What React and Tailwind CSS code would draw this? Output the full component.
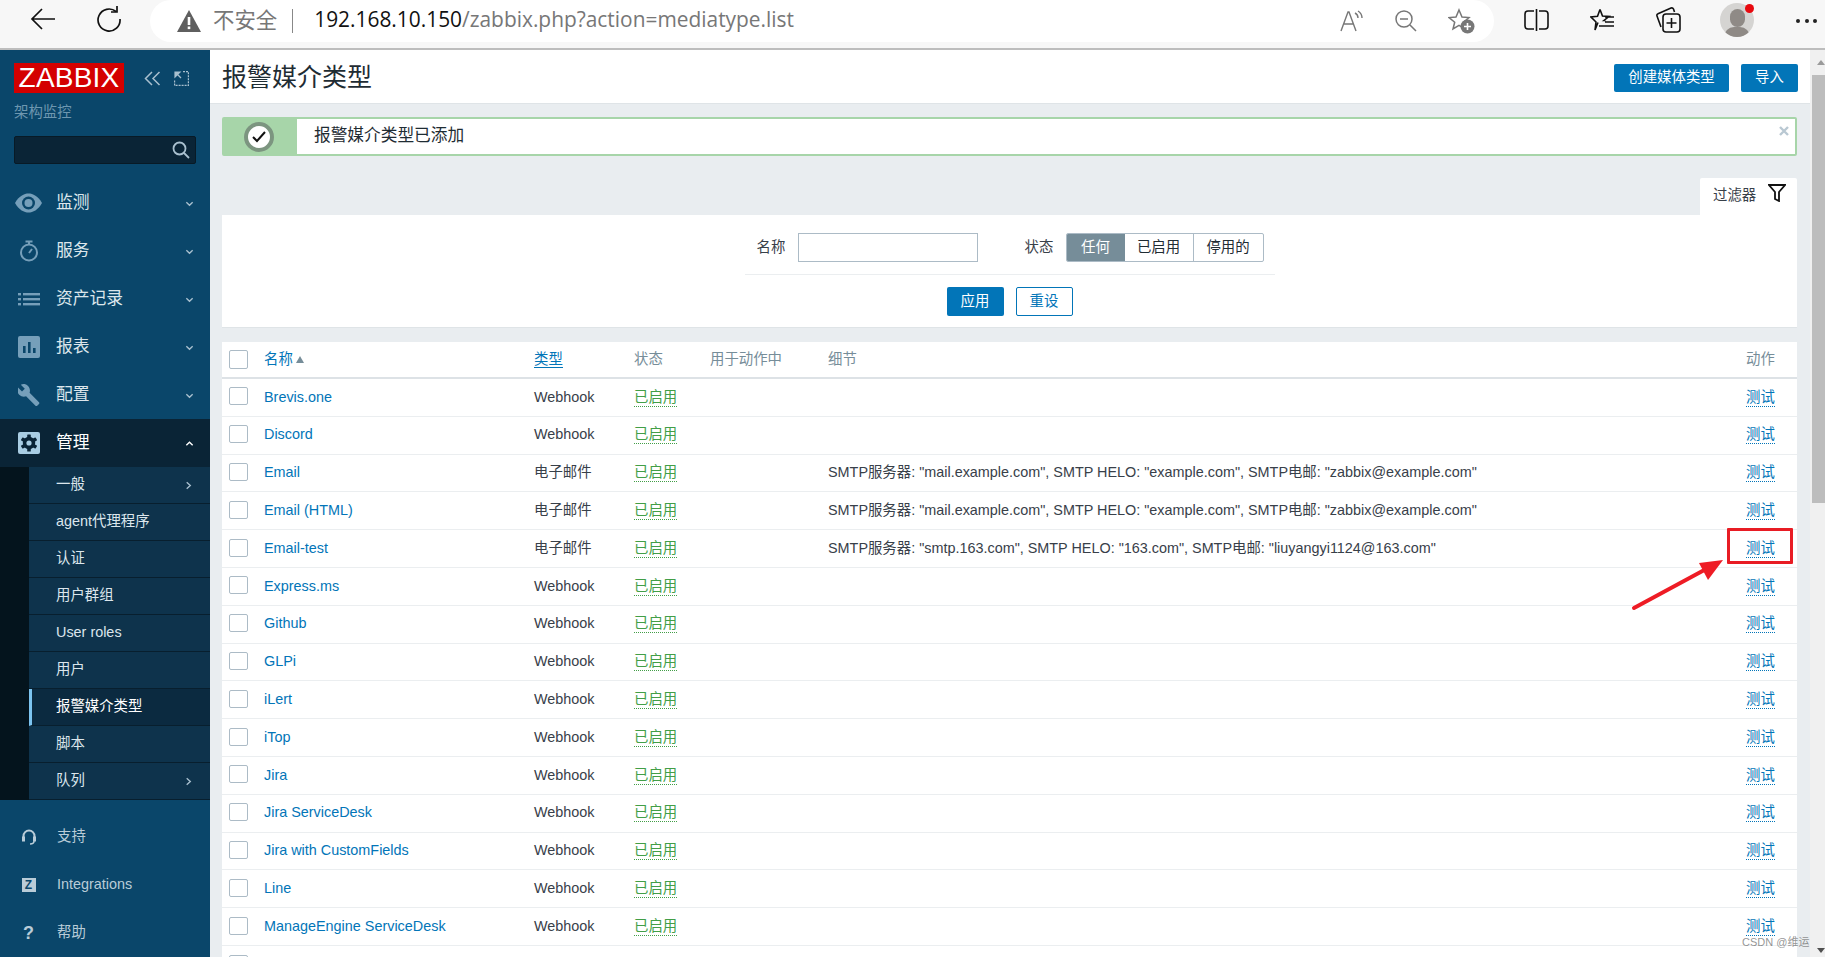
import React from "react";

const rows = [
  ["Brevis.one", "Webhook", ""],
  ["Discord", "Webhook", ""],
  ["Email", "电子邮件", 'SMTP服务器: "mail.example.com", SMTP HELO: "example.com", SMTP电邮: "zabbix@example.com"'],
  ["Email (HTML)", "电子邮件", 'SMTP服务器: "mail.example.com", SMTP HELO: "example.com", SMTP电邮: "zabbix@example.com"'],
  ["Email-test", "电子邮件", 'SMTP服务器: "smtp.163.com", SMTP HELO: "163.com", SMTP电邮: "liuyangyi1124@163.com"'],
  ["Express.ms", "Webhook", ""],
  ["Github", "Webhook", ""],
  ["GLPi", "Webhook", ""],
  ["iLert", "Webhook", ""],
  ["iTop", "Webhook", ""],
  ["Jira", "Webhook", ""],
  ["Jira ServiceDesk", "Webhook", ""],
  ["Jira with CustomFields", "Webhook", ""],
  ["Line", "Webhook", ""],
  ["ManageEngine ServiceDesk", "Webhook", ""],
];

const Chevron = ({ up, right, light }) => (
  <svg width="9" height="9" viewBox="0 0 10 10" fill="none" stroke={light ? "#ffffff" : "#a9c0cf"} strokeWidth="1.5" className="shrink-0">
    {up ? <path d="M1.5 7 5 3.5 8.5 7" /> : right ? <path d="M3 1.5 7 5 3 8.5" /> : <path d="M1.5 3.5 5 7 8.5 3.5" />}
  </svg>
);

const NavIcon = ({ kind }) => {
  const c = "#769fba";
  if (kind === "eye")
    return (
      <svg width="27" height="20" viewBox="0 0 27 20">
        <path d="M0 10C4 3 9 0.5 13.5 0.5S23 3 27 10c-4 7-9 9.5-13.5 9.5S4 17 0 10z" fill={c} />
        <circle cx="13.5" cy="10" r="6.5" fill="#0a466a" />
        <circle cx="13.5" cy="10" r="4" fill={c} />
      </svg>
    );
  if (kind === "timer")
    return (
      <svg width="20" height="22" viewBox="0 0 20 22" fill="none" stroke={c} strokeWidth="2">
        <circle cx="10" cy="12.5" r="8" />
        <path d="M6.5 1.5h7M10 2v3M10 13l3-4" />
      </svg>
    );
  if (kind === "list")
    return (
      <svg width="22" height="14" viewBox="0 0 22 14" fill={c}>
        <rect x="0" y="1" width="3" height="2.4" />
        <rect x="0" y="6" width="3" height="2.4" />
        <rect x="0" y="11" width="3" height="2.4" />
        <rect x="5" y="1" width="17" height="2.4" />
        <rect x="5" y="6" width="17" height="2.4" />
        <rect x="5" y="11" width="17" height="2.4" />
      </svg>
    );
  if (kind === "chart")
    return (
      <svg width="22" height="22" viewBox="0 0 22 22">
        <rect width="22" height="22" rx="2" fill={c} />
        <rect x="5" y="10" width="2.6" height="7" fill="#0a466a" />
        <rect x="10" y="6" width="2.6" height="11" fill="#0a466a" />
        <rect x="15" y="12" width="2.6" height="5" fill="#0a466a" />
      </svg>
    );
  if (kind === "wrench")
    return (
      <svg width="22" height="22" viewBox="0 0 22 22" fill={c}>
        <path d="M21 18.2 11.6 8.8c.8-2.4.3-5-1.6-6.9C8 0 5.100-.4 2.800.7l4 4-2.800 2.800-4.100-4C-1.200 5.800-.7 8.700 1.200 10.700c1.900 1.900 4.500 2.400 6.900 1.600l9.400 9.400c.5.5 1.200.5 1.700 0l1.800-1.800c.5-.5.500-1.200 0-1.700z" />
      </svg>
    );
  return (
    <svg width="22" height="22" viewBox="0 0 22 22">
      <rect width="22" height="22" rx="2" fill="#a9cde3" />
      <g transform="translate(11 11)" fill="#0a2436">
        <circle r="6.200" />
        <rect x="-1.800" y="-8.500" width="3.600" height="17" rx="0.600" />
        <rect x="-1.800" y="-8.500" width="3.600" height="17" rx="0.600" transform="rotate(60)" />
        <rect x="-1.800" y="-8.500" width="3.600" height="17" rx="0.600" transform="rotate(120)" />
        <circle r="2.600" fill="#a9cde3" />
      </g>
    </svg>
  );
};

const NavItem = ({ icon, label, active }) => (
  <div className={`h-12 flex items-center pr-[16px] ${active ? "bg-[#0a2436] text-white" : "text-[#dce6ec]"}`}>
    <div className="w-[56px] flex justify-center pl-[1px]">
      <NavIcon kind={icon} />
    </div>
    <span className="flex-1 text-[16.8px]">{label}</span>
    <Chevron up={active} light={active} />
  </div>
);

const SubItem = ({ label, arrow, current }) => (
  <div className={`h-[37px] flex items-center pl-[27px] pr-[17px] border-b border-[#081f2e] text-[14.4px] ${current ? "border-l-[3px] !pl-[24px] border-l-[#7cc4f0] bg-[#0b2a40] text-white" : "bg-[#0e334c] text-[#dce6ec]"}`}>
    <span className="flex-1">{label}</span>
    {arrow && <Chevron right />}
  </div>
);

const FootItem = ({ icon, label }) => (
  <div className="h-12 flex items-center text-[14.4px] text-[#b9ccd8]">
    <div className="w-[57px] flex justify-center">{icon}</div>
    <span>{label}</span>
  </div>
);

const Browser = () => (
  <div className="h-[50px] shrink-0 bg-[#f7f7f7] border-b-2 border-[#bdbdbd] flex items-start">
    <svg width="26" height="24" viewBox="0 0 26 24" fill="none" stroke="#111" strokeWidth="1.700" className="ml-[30px] mt-[7px] shrink-0">
      <path d="M25 12H2M12 2 2 12l10 10" />
    </svg>
    <svg width="26" height="26" viewBox="0 0 26 26" fill="none" stroke="#111" strokeWidth="1.700" className="ml-[40px] mt-[6px] shrink-0">
      <path d="M20 5.500A11 11 0 1 0 24 13" />
      <path d="M21 0v6h-6" />
    </svg>
    <div className="ml-[28px] w-[1344px] h-[42px] bg-white rounded-[21px] flex items-center shrink-0 font-['Open_Sans','Noto_Sans_CJK_SC',sans-serif]">
      <svg width="24" height="22" viewBox="0 0 24 22" className="ml-[27px] mr-[12px] shrink-0">
        <path d="M12 0 24 22H0z" fill="#5f5f5f" />
        <rect x="10.700" y="7" width="2.600" height="8" fill="#fff" />
        <rect x="10.700" y="16.500" width="2.600" height="2.600" fill="#fff" />
      </svg>
      <span className="text-[21.4px] text-[#777] mb-[2px]">不安全</span>
      <span className="w-[1px] h-[24px] bg-[#888] ml-[15px] mr-[21px]" />
      <span className="text-[20.9px] whitespace-nowrap text-[#777] mb-[2px]">
        <span className="text-[#111]">192.168.10.150</span>/zabbix.php?action=mediatype.list
      </span>
      <div className="ml-auto flex items-center mr-[19px]">
        <svg width="24" height="22" viewBox="0 0 24 22" fill="none" stroke="#777" strokeWidth="1.400">
          <path d="M1 21 8 2h1l7 19M4 14h10M15 3c2 1 3 3 3 5M18 1c3 2 4 4 4 7" />
        </svg>
        <svg width="22" height="22" viewBox="0 0 22 22" fill="none" stroke="#777" strokeWidth="1.500" className="ml-[31px]">
          <circle cx="9" cy="9" r="8" />
          <path d="M5 9h8M15 15l6 6" />
        </svg>
        <svg width="27" height="26" viewBox="0 0 27 26" className="ml-[31px]">
          <path d="M11 2 14 9l7 .6-5.500 4.600L17 21l-6-3.600L5 21l1.700-6.800L1 9.600 8 9z" fill="none" stroke="#777" strokeWidth="1.500" />
          <circle cx="19.500" cy="18.500" r="7" fill="#777" />
          <path d="M19.500 15v7M16 18.500h7" stroke="#fff" strokeWidth="1.600" />
        </svg>
      </div>
    </div>
    <svg width="25" height="22" viewBox="0 0 25 22" fill="none" stroke="#111" strokeWidth="1.600" className="ml-[30px] mt-[9px] shrink-0">
      <path d="M10 2H4a3 3 0 0 0-3 3v12a3 3 0 0 0 3 3h6M15 2h6a3 3 0 0 1 3 3v12a3 3 0 0 1-3 3h-6M12.500 0v22" />
    </svg>
    <svg width="25" height="24" viewBox="0 0 25 24" fill="none" stroke="#111" strokeWidth="1.600" className="ml-[41px] mt-[8px] shrink-0">
      <path d="M10 1.500 12.500 8l6.500.5-5 4 1.500 0M8 14.500 5 22l1-8L1 9l6.500-.8L10 1.500M15 9h9M15 14h9M9 18h15" />
    </svg>
    <svg width="25" height="26" viewBox="0 0 25 26" fill="none" stroke="#111" strokeWidth="1.600" className="ml-[41px] mt-[7px] shrink-0">
      <path d="M5 20 1 9c-.4-1 .2-2 1-2.300L15 1c1-.3 2 0 2.500 1l1 3" />
      <rect x="7" y="7" width="17" height="18" rx="3" />
      <path d="M15.500 11v10M10.500 16h10" />
    </svg>
    <div className="ml-[39px] mt-[3px] w-[34px] h-[34px] rounded-full bg-[#d5d4d2] relative overflow-hidden shrink-0">
      <div className="absolute left-[10px] top-[6px] w-[15px] h-[18px] rounded-full bg-[#8f8a86]" />
      <div className="absolute left-[4px] top-[24px] w-[26px] h-[20px] rounded-full bg-[#8f8a86]" />
    </div>
    <div className="ml-[42px] mt-[19px] flex gap-[4.500px] shrink-0">
      <span className="w-[4px] h-[4px] rounded-full bg-[#222]" />
      <span className="w-[4px] h-[4px] rounded-full bg-[#222]" />
      <span className="w-[4px] h-[4px] rounded-full bg-[#222]" />
    </div>
    <span className="absolute left-[1745px] top-[4px] w-[9px] h-[9px] rounded-full bg-[#e8090f]" />
  </div>
);

const Sidebar = () => (
  <aside className="w-[210px] shrink-0 bg-[#0a466a] flex flex-col overflow-hidden">
    <div className="flex items-center pl-[14px] pt-[13px]">
      <div className="w-[110px] h-[30px] bg-[#d40000] text-white text-[28px] leading-[30px] text-center tracking-[0.2px]">ZABBIX</div>
      <svg width="17" height="15" viewBox="0 0 17 15" fill="none" stroke="#a9c0cf" strokeWidth="1.500" className="ml-[20px]">
        <path d="M8 1 1.500 7.500 8 14M15.500 1 9 7.500 15.500 14" />
      </svg>
      <svg width="15" height="15" viewBox="0 0 15 15" fill="none" stroke="#a9c0cf" strokeWidth="1.200" className="ml-[13px]">
        <path d="M9 .6h5.400V14.400H.6V9" strokeDasharray="2 1" />
        <path d="M1 1h5L1 6z" fill="#a9c0cf" />
        <path d="M3 3l4 4" />
      </svg>
    </div>
    <div className="pl-[14px] mt-[9px] text-[14.4px] leading-[20px] text-[#6e97b0]">架构监控</div>
    <div className="mx-[14px] mt-[14px] h-[29px] rounded-[2px] bg-[#0a2436] border border-[#081a26] flex items-center justify-end pr-[5px]">
      <svg width="18" height="18" viewBox="0 0 18 18" fill="none" stroke="#a9c0cf" strokeWidth="1.800">
        <circle cx="7.500" cy="7.500" r="6" />
        <path d="M12 12l5 5" />
      </svg>
    </div>
    <nav className="mt-[15px]">
      <NavItem icon="eye" label="监测" />
      <NavItem icon="timer" label="服务" />
      <NavItem icon="list" label="资产记录" />
      <NavItem icon="chart" label="报表" />
      <NavItem icon="wrench" label="配置" />
      <NavItem icon="gear" label="管理" active />
      <div className="bg-[#04141d] pl-[29px]">
        <SubItem label="一般" arrow />
        <SubItem label="agent代理程序" />
        <SubItem label="认证" />
        <SubItem label="用户群组" />
        <SubItem label="User roles" />
        <SubItem label="用户" />
        <SubItem label="报警媒介类型" current />
        <SubItem label="脚本" />
        <SubItem label="队列" arrow />
      </div>
    </nav>
    <div className="mt-[13px]">
      <FootItem
        label="支持"
        icon={
          <svg width="14" height="16" viewBox="0 0 14 16" fill="none" stroke="#b9ccd8" strokeWidth="2">
            <path d="M1.500 9V7a5.500 5.500 0 0 1 11 0v2" />
            <rect x="0.500" y="8" width="2" height="4" fill="#b9ccd8" strokeWidth="1" />
            <rect x="11.500" y="8" width="2" height="4" fill="#b9ccd8" strokeWidth="1" />
            <path d="M12 12c0 2-2 3-4 3" strokeWidth="1.500" />
          </svg>
        }
      />
      <FootItem
        label="Integrations"
        icon={
          <div className="w-[14px] h-[14px] bg-[#b9ccd8] text-[#0a466a] text-[12px] leading-[14px] font-bold text-center">Z</div>
        }
      />
      <FootItem label="帮助" icon={<span className="text-[18px] font-bold text-[#b9ccd8] leading-none">?</span>} />
    </div>
  </aside>
);

const Row = ({ r }) => (
  <div className="h-[37.8px] shrink-0 flex items-center border-b border-[#ebeef0] text-[14.4px] whitespace-nowrap">
    <div className="w-[42px] pl-[7px] shrink-0 pb-[2px]">
      <div className="w-[19px] h-[18px] rounded-[2px] border border-[#acbbc6] bg-white" />
    </div>
    <div className="w-[270px] shrink-0 text-[#0275b8]">{r[0]}</div>
    <div className="w-[100px] shrink-0 text-[#384049]">{r[1]}</div>
    <div className="w-[194px] shrink-0">
      <span className="text-[#429e47] border-b border-dotted border-[#429e47] leading-[17px] inline-block">已启用</span>
    </div>
    <div className="w-[917px] shrink-0 text-[#384049] overflow-hidden">{r[2]}</div>
    <div className="flex-1 pl-[1px]">
      <span className="text-[#0275b8] border-b border-dotted border-[#0275b8] leading-[17px] inline-block">测试</span>
    </div>
  </div>
);

export default function App() {
  return (
    <div className="w-[1825px] h-[957px] overflow-hidden relative flex flex-col bg-[#ebeef0] font-['Liberation_Sans','Noto_Sans_CJK_SC',sans-serif]">
      <Browser />
      <div className="flex flex-1 min-h-0">
        <Sidebar />
        <main className="w-[1600px] shrink-0 overflow-hidden bg-[#e9edf0]">
          <div className="h-[54px] bg-white border-b border-[#dfe4e7] flex items-center pl-[12px] pr-[12px] pt-[2px]">
            <h1 className="text-[25px] text-[#1f2c33] flex-1">报警媒介类型</h1>
            <button className="h-[28px] w-[115px] rounded-[2px] bg-[#0275b8] text-white text-[14.4px]">创建媒体类型</button>
            <button className="h-[28px] w-[57px] ml-[12px] rounded-[2px] bg-[#0275b8] text-white text-[14.4px]">导入</button>
          </div>
          <div className="mx-[12px] mr-[13px] mt-[13px] h-[39px] border-2 border-[#a7d5a9] rounded-[2px] bg-white flex items-center relative">
            <div className="w-[73px] h-full bg-[#a7d5a9] flex items-center justify-center shrink-0 pr-[3px]">
              <div className="w-[30px] h-[30px] rounded-full border-[4px] border-[#7c9580] bg-white flex items-center justify-center">
                <svg width="14" height="12" viewBox="0 0 14 12" fill="none" stroke="#111" strokeWidth="2">
                  <path d="M1 6l4 4 8-9" />
                </svg>
              </div>
            </div>
            <span className="ml-[17px] text-[16.7px] text-[#1f2c33] mb-[2px]">报警媒介类型已添加</span>
            <svg width="10" height="10" viewBox="0 0 10 10" stroke="#b9c8d2" strokeWidth="2.400" className="absolute right-[6px] top-[7px]">
              <path d="M1 1l8 8M9 1l-8 8" />
            </svg>
          </div>
          <div className="flex justify-end mr-[13px] mt-[22px]">
            <div className="w-[97px] h-[37px] bg-white flex items-start rounded-t-[2px] pl-[13px]">
              <span className="text-[14.4px] text-[#384049] mt-[7px]">过滤器</span>
              <svg width="18" height="18" viewBox="0 0 18 18" fill="none" stroke="#111" strokeWidth="1.800" className="ml-[12px] mt-[6px]">
                <path d="M1 1h16l-6 7v9l-4-2V8z" />
              </svg>
            </div>
          </div>
          <div className="ml-[12px] mr-[13px] h-[113px] bg-white border-b border-[#dfe4e7] flex flex-col items-center pt-[18px]">
            <div className="flex items-center w-[508px] text-[14.4px]">
              <span className="text-[#384049] w-[42px] pl-[1px]">名称</span>
              <div className="w-[180px] h-[29px] border border-[#acbbc6] bg-white" />
              <span className="text-[#384049] ml-[47px] w-[41px]">状态</span>
              <div className="flex h-[29px] w-[198px] rounded-[2px] border border-[#acbbc6] overflow-hidden">
                <div className="w-[58px] bg-[#768d99] text-white flex items-center justify-center">任何</div>
                <div className="w-[69px] border-r border-[#acbbc6] text-[#1f2c33] flex items-center justify-center">已启用</div>
                <div className="flex-1 text-[#1f2c33] flex items-center justify-center">停用的</div>
              </div>
            </div>
            <div className="w-[530px] h-[1px] bg-[#ebeef0] mt-[12px]" />
            <div className="flex gap-[12px] mt-[12px]">
              <button className="w-[57px] h-[29px] pt-[1px] rounded-[2px] bg-[#0275b8] text-white text-[14.4px]">应用</button>
              <button className="w-[57px] h-[29px] pt-[1px] rounded-[2px] border border-[#0275b8] text-[#0275b8] text-[14.4px] bg-white">重设</button>
            </div>
          </div>
          <div className="ml-[12px] mr-[13px] mt-[14px] bg-white">
            <div className="h-[37px] flex items-center border-b-2 border-[#dde2e6] text-[14.4px] pt-[1px]">
              <div className="w-[42px] pl-[7px] shrink-0 pb-[2px]">
                <div className="w-[19px] h-[19px] rounded-[2px] border border-[#acbbc6]" />
              </div>
              <div className="w-[270px] shrink-0 text-[#0275b8] flex items-center gap-[3px]">
                名称
                <svg width="8" height="7" viewBox="0 0 8 7" fill="#768d99"><path d="M4 0l4 7H0z" /></svg>
              </div>
              <div className="w-[100px] shrink-0">
                <span className="text-[#0275b8] border-b border-[#0275b8] leading-[16px] inline-block">类型</span>
              </div>
              <div className="w-[76px] shrink-0 text-[#768d99]">状态</div>
              <div className="w-[118px] shrink-0 text-[#768d99]">用于动作中</div>
              <div className="w-[917px] shrink-0 text-[#768d99]">细节</div>
              <div className="flex-1 text-[#768d99] pl-[1px]">动作</div>
            </div>
            {rows.map((r) => (
              <Row key={r[0]} r={r} />
            ))}
            <div className="h-[37.8px] flex items-center pl-[7px]">
              <div className="w-[19px] h-[18px] rounded-[2px] border border-[#acbbc6] bg-white mb-[2px]" />
            </div>
          </div>
        </main>
        <div className="flex-1 bg-[#f0f0f0] flex flex-col items-end relative">
          <div className="w-0 h-0 border-x-[4px] border-x-transparent border-b-[5px] border-b-[#9a9a9a] mt-[10px]" />
          <div className="absolute left-[2px] top-[25px] w-[13px] h-[428px] bg-[#bdbdbd]" />
          <div className="w-0 h-0 border-x-[4px] border-x-transparent border-t-[5px] border-t-[#505050] absolute right-0 bottom-[4px]" />
        </div>
      </div>
      <div className="absolute left-[1727px] top-[528px] w-[66px] h-[36px] border-[3px] border-[#e81c24] rounded-[1px]" />
      <svg width="100" height="60" viewBox="0 0 100 60" className="absolute left-[1630px] top-[555px]">
        <path d="M4 53 78 13" stroke="#ee1c25" strokeWidth="4" strokeLinecap="round" />
        <path d="M93 5 69 8 78 25z" fill="#ee1c25" />
      </svg>
      <div className="absolute left-[1742px] top-[934px] text-[11px] text-[#666]/70 whitespace-nowrap">CSDN @维运</div>
    </div>
  );
}
